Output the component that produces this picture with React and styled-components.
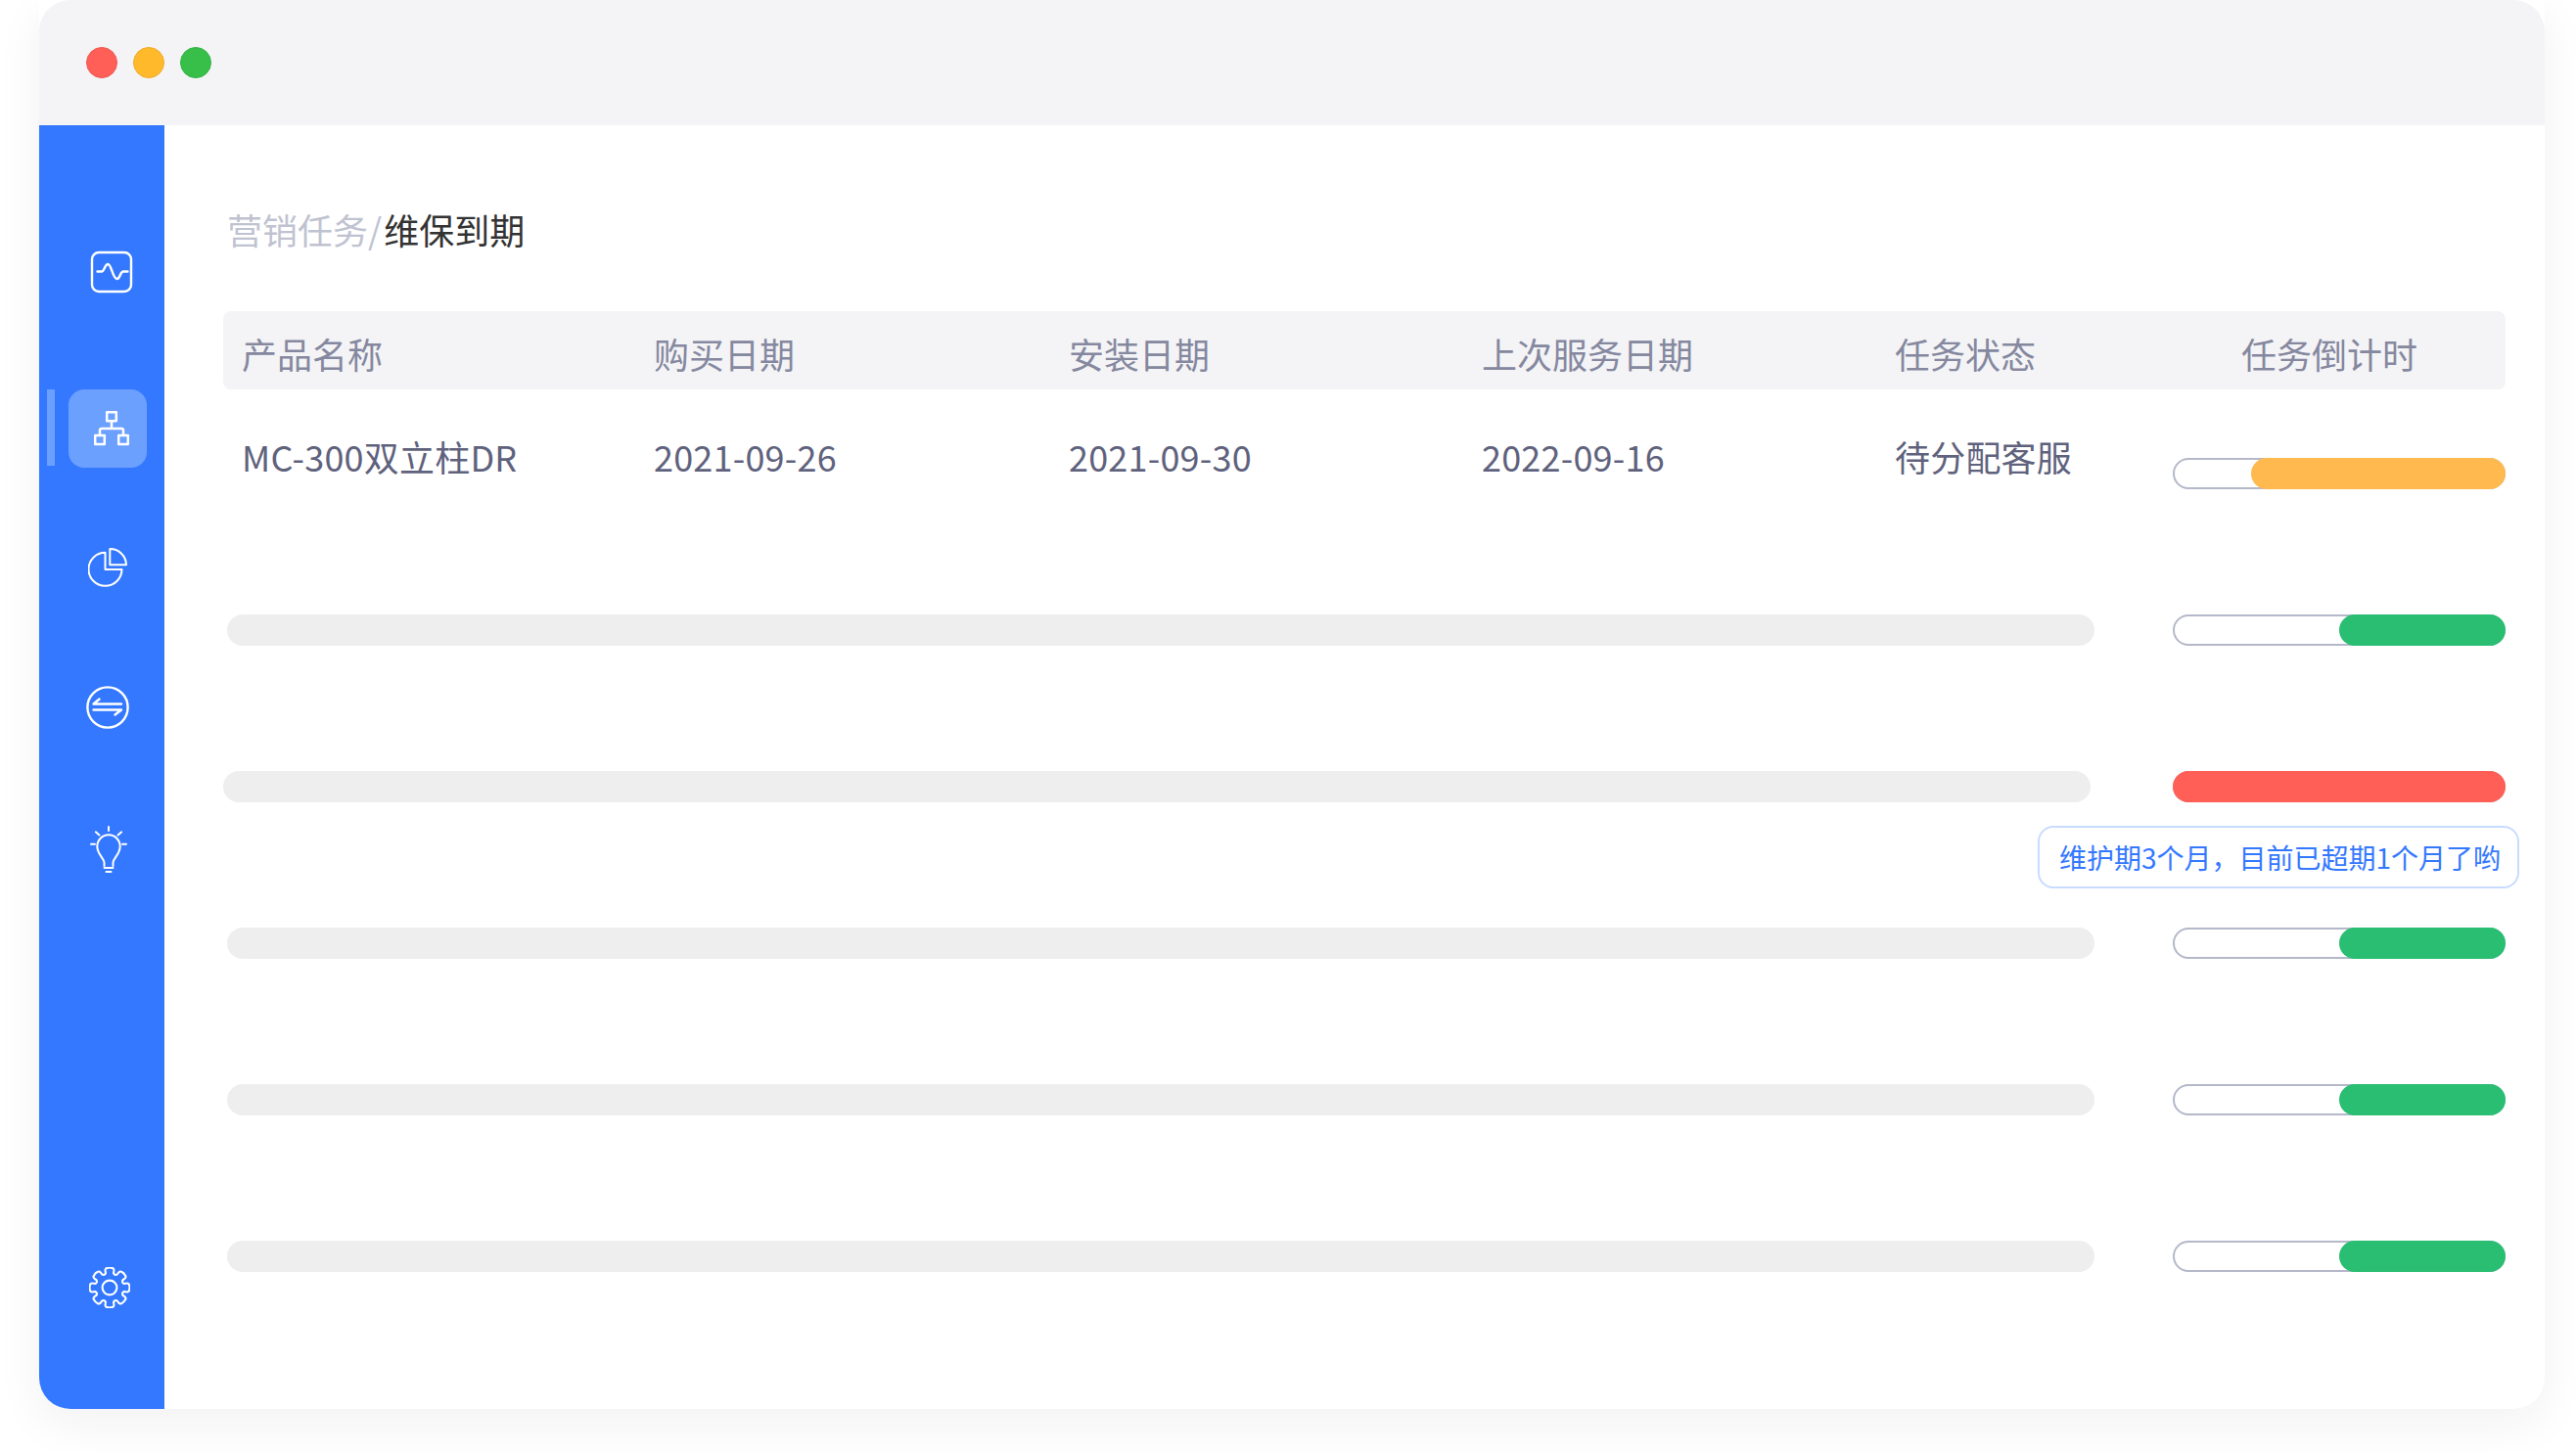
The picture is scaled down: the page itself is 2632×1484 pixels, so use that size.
import React from "react";
import styled, { createGlobalStyle } from "styled-components";

const Global = createGlobalStyle`
  html, body { margin: 0; padding: 0; background: #fff; }
  body { font-family: "Noto Sans CJK SC", "Noto Sans", sans-serif; }
  * { box-sizing: border-box; }
`;

const Page = styled.div`
  width: 2632px;
  height: 1484px;
  padding-left: 40px;
  overflow: hidden;
`;

const Window = styled.div`
  width: 2560px;
  height: 1440px;
  border-radius: 0 0 32px 32px;
  display: flex;
  flex-direction: column;
  background: #fff;
  box-shadow: 0 16px 48px rgba(30, 34, 60, 0.06);
`;

const TitleBar = styled.header`
  height: 128px;
  flex: none;
  background: #f4f4f6;
  border-radius: 32px 32px 0 0;
  display: flex;
  align-items: center;
  gap: 16px;
  padding-left: 48px;
`;

const Dot = styled.span`
  width: 32px;
  height: 32px;
  border-radius: 50%;
  background: ${(p) => p.$color};
  border: 1px solid ${(p) => p.$edge};
`;

const Body = styled.div`
  flex: 1;
  display: flex;
  min-height: 0;
`;

const Sidebar = styled.nav`
  width: 128px;
  flex: none;
  background: #3478ff;
  border-radius: 0 0 0 32px;
  display: flex;
  flex-direction: column;
  padding: 110px 0 84px 8px;
`;

const NavRow = styled.div`
  display: flex;
  gap: 14px;
  margin-top: ${(p) => p.$gap}px;
  ${(p) => p.$bottom && "margin-top: auto;"}
`;

const Indicator = styled.span`
  width: 8px;
  height: 78px;
  background: ${(p) => (p.$active ? "#6ca0ff" : "transparent")};
`;

const NavItem = styled.div`
  width: 80px;
  height: 80px;
  border-radius: 16px;
  background: ${(p) => (p.$active ? "#6ca0ff" : "transparent")};
  display: flex;
  align-items: center;
  justify-content: center;
  padding-left: ${(p) => p.$dx * 2}px;
`;

const Main = styled.main`
  flex: 1;
  min-width: 0;
  padding: 82px 40px 0 60px;
`;

const Crumb = styled.h1`
  margin: 0;
  padding-left: 4px;
  font-size: 36px;
  line-height: 48px;
  font-weight: 400;
  color: #bfc3d1;
`;

const CrumbCurrent = styled.span`
  margin-left: 2px;
  color: #333333;
`;

const cols = "421px 424px 422px 422px";

const HeadRow = styled.div`
  margin-top: 60px;
  height: 80px;
  background: #f4f4f6;
  border-radius: 8px;
  padding: 19px 0 0 19px;
  display: grid;
  grid-template-columns: ${cols} 354px 1fr;
  font-size: 36px;
  line-height: 48px;
  color: #85889f;
`;

const HeadCell = styled.div`
  white-space: nowrap;
`;

const Rows = styled.div`
  margin-top: 70px;
  display: flex;
  flex-direction: column;
  gap: 128px;
`;

const Row = styled.div`
  height: 32px;
  display: flex;
  justify-content: space-between;
  align-items: flex-start;
`;

const DataCells = styled.div`
  flex: 1;
  margin-top: -26px;
  padding-left: 19px;
  display: grid;
  grid-template-columns: ${cols} 1fr;
  font-size: 36px;
  line-height: 48px;
  letter-spacing: 0.2px;
  color: #5f627d;
`;

const DataCell = styled.div`
  white-space: nowrap;
`;

const Skeleton = styled.div`
  width: 1908px;
  height: 32px;
  margin-left: ${(p) => p.$shift}px;
  border-radius: 16px;
  background: #eeeeee;
`;

const Track = styled.div`
  position: relative;
  width: 340px;
  height: 32px;
  flex: none;
  border: 2px solid #b4b8c9;
  border-radius: 16px;
  background: #fff;
`;

const Fill = styled.div`
  position: absolute;
  top: -2px;
  right: -2px;
  bottom: -2px;
  width: ${(p) => p.$width}px;
  border-radius: 16px;
  background: ${(p) => p.$color};
`;

const Tip = styled.div`
  position: absolute;
  top: 54px;
  right: -16px;
  width: 492px;
  height: 64px;
  border: 2px solid #c8dcff;
  border-radius: 16px;
  background: #fff;
  padding-left: 20px;
  font-size: 28px;
  line-height: 60px;
  white-space: nowrap;
  color: #3478ff;
`;

const Ico = styled.svg`
  display: block;
  flex: none;
  fill: none;
  stroke: #fff;
  stroke-linecap: round;
  stroke-linejoin: round;
`;

const IconActivity = () => (
  <Ico width="44" height="44" viewBox="-1 -1 44 44" strokeWidth="2.4">
    <rect x="1" y="1" width="40" height="40" rx="7" />
    <path d="M6.5 20.5H11C13.5 20.5 14 13 17.3 13C21 13 22 28 26.5 28C30 28 29.5 20.5 33 20.5H37.5" />
  </Ico>
);

const IconNetwork = () => (
  <Ico width="36" height="36" viewBox="0 0 36 36" strokeWidth="2.5" strokeLinejoin="miter">
    <rect x="13.2" y="1.2" width="9.6" height="9" />
    <rect x="1.2" y="25" width="9.6" height="9" />
    <rect x="25.2" y="25" width="9.6" height="9" />
    <path d="M18 10.5V18M6 25V20Q6 18 8 18H28Q30 18 30 20V25" />
  </Ico>
);

const IconPie = () => (
  <Ico width="40" height="40" viewBox="0 0 40 40" strokeWidth="2">
    <path d="M17.5 4.8A17 17 0 1 0 34.5 22H17.5Z" />
    <path d="M22.3 1A16.5 16.5 0 0 1 39 17.3H22.3Z" />
  </Ico>
);

const IconSwap = () => (
  <Ico width="44" height="44" viewBox="0 0 44 44" strokeWidth="2.4">
    <circle cx="22" cy="22" r="20.6" />
    <path d="M36 18.5H7.5L13.5 13.5" />
    <path d="M7.5 24.5H36L29.5 29.5" />
  </Ico>
);

const IconBulb = () => (
  <Ico width="38" height="48" viewBox="0 0 38 48" strokeWidth="2">
    <path d="M19 1V5M1 18.7H5M33 18.7H37M5.8 6.3L9.5 9.4M32.2 6.3L28.5 9.6" />
    <path d="M14.5 41V37.5C14 33 7.3 29 7.3 21A11.7 11.7 0 0 1 30.7 21C30.7 29 24 33 23.5 37.5V41" />
    <path d="M14.5 43H23.5M16.5 47H21.5" />
  </Ico>
);

const polar = (r, deg) => {
  const t = ((deg - 90) * Math.PI) / 180;
  return `${(21 + r * Math.cos(t)).toFixed(2)} ${(21 + r * Math.sin(t)).toFixed(2)}`;
};

const gearPath = () => {
  let d = "";
  for (let i = 0; i < 8; i++) {
    const a = i * 45;
    d += `${i === 0 ? "M" : "L"}${polar(15.5, a - 15)}`;
    d += `Q${polar(20.6, a - 15)} ${polar(20.2, a - 7)}`;
    d += `Q${polar(21, a)} ${polar(20.2, a + 7)}`;
    d += `Q${polar(20.6, a + 15)} ${polar(15.5, a + 15)}`;
    d += `Q${polar(13.2, a + 22.5)} ${polar(15.5, a + 30)}`;
  }
  return d + "Z";
};

const IconGear = () => (
  <Ico width="42" height="42" viewBox="0 0 42 42" strokeWidth="2.1">
    <path d={gearPath()} />
    <circle cx="21" cy="21" r="7.4" />
  </Ico>
);

const nav = [
  { icon: <IconActivity />, gap: 0, dx: 4 },
  { icon: <IconNetwork />, gap: 80, dx: 4, active: true },
  { icon: <IconPie />, gap: 62, dx: 0 },
  { icon: <IconSwap />, gap: 63, dx: 0 },
  { icon: <IconBulb />, gap: 65, dx: 1 },
  { icon: <IconGear />, bottom: true, dx: 2 },
];

const head = ["产品名称", "购买日期", "安装日期", "上次服务日期", "任务状态", "任务倒计时"];
const data = ["MC-300双立柱DR", "2021-09-26", "2021-09-30", "2022-09-16", "待分配客服"];

const GREEN = "#29be72";
const rows = [
  { width: 260, color: "#ffb94f" },
  { width: 170, color: GREEN, shift: 4 },
  { width: 340, color: "#ff5f57", shift: 0, tip: "维护期3个月，目前已超期1个月了哟" },
  { width: 170, color: GREEN, shift: 4 },
  { width: 170, color: GREEN, shift: 4 },
  { width: 170, color: GREEN, shift: 4 },
];

export default function App() {
  return (
    <Page>
      <Global />
      <Window>
        <TitleBar>
          <Dot $color="#ff5f57" $edge="#ec5a52" />
          <Dot $color="#ffb92b" $edge="#eeaa28" />
          <Dot $color="#38bf4a" $edge="#35b246" />
        </TitleBar>
        <Body>
          <Sidebar>
            {nav.map((n, i) => (
              <NavRow key={i} $gap={n.gap} $bottom={n.bottom}>
                <Indicator $active={n.active} />
                <NavItem $active={n.active} $dx={n.dx}>
                  {n.icon}
                </NavItem>
              </NavRow>
            ))}
          </Sidebar>
          <Main>
            <Crumb>
              营销任务/<CrumbCurrent>维保到期</CrumbCurrent>
            </Crumb>
            <HeadRow>
              {head.map((h) => (
                <HeadCell key={h}>{h}</HeadCell>
              ))}
            </HeadRow>
            <Rows>
              {rows.map((r, i) => (
                <Row key={i}>
                  {i === 0 ? (
                    <DataCells>
                      {data.map((d) => (
                        <DataCell key={d}>{d}</DataCell>
                      ))}
                    </DataCells>
                  ) : (
                    <Skeleton $shift={r.shift} />
                  )}
                  <Track>
                    <Fill $width={r.width} $color={r.color} />
                    {r.tip && <Tip>{r.tip}</Tip>}
                  </Track>
                </Row>
              ))}
            </Rows>
          </Main>
        </Body>
      </Window>
    </Page>
  );
}
